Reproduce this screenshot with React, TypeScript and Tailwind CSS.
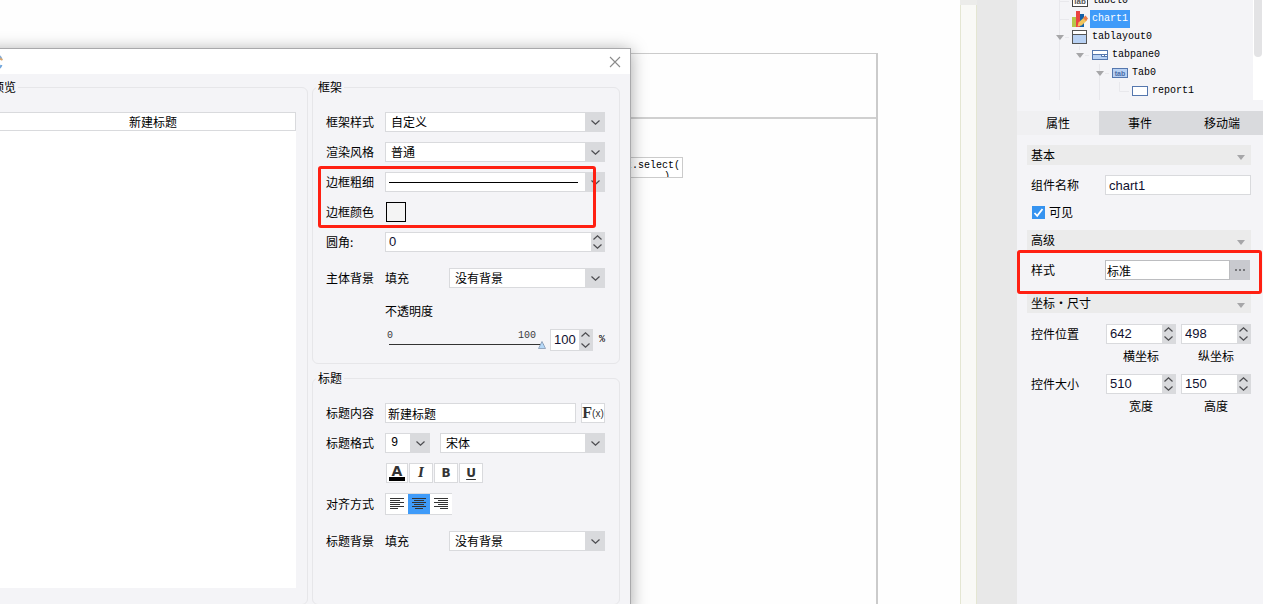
import { useState } from 'react';
import type { ReactNode } from 'react';

const LABEL_FONT = "font-['Noto_Sans_CJK_SC',sans-serif]";
const MONO_FONT = "font-['Liberation_Mono','Noto_Sans_CJK_SC',monospace]";
const INPUT_FONT = "font-['Liberation_Sans','Noto_Sans_CJK_SC',sans-serif]";

function Chevron({ up = false }: { up?: boolean }) {
  return (
    <svg width="9" height="5" viewBox="0 0 9 5" fill="none" stroke="#4b4b4f" strokeWidth="1.2">
      <path d={up ? 'M0.5 4.5L4.5 0.8L8.5 4.5' : 'M0.5 0.5L4.5 4.2L8.5 0.5'} />
    </svg>
  );
}

function Triangle() {
  return (
    <svg width="8" height="5" viewBox="0 0 8 5">
      <path d="M0 0H8L4 5Z" fill="#a6a6a8" />
    </svg>
  );
}

function Select({ label, options, className, children }: {
  label: string;
  options: string[];
  className: string;
  children?: ReactNode;
}) {
  return (
    <div className={`relative h-5 ${className}`}>
      <select
        aria-label={label}
        className="block h-5 w-full appearance-none border border-[#d9dadd] bg-white pl-[5px] pr-5 text-xs leading-[18px] text-black outline-none"
      >
        {options.map((option) => (
          <option key={option}>{option}</option>
        ))}
      </select>
      {children}
      <span className="pointer-events-none absolute inset-y-0 right-0 flex w-5 items-center justify-center bg-[#d9dadd]">
        <Chevron />
      </span>
    </div>
  );
}

function Spinner({ label, initial, className }: { label: string; initial: number; className: string }) {
  const [value, setValue] = useState(initial);

  return (
    <div className={`flex border border-[#d9dadd] bg-white ${className}`}>
      <input
        type="number"
        aria-label={label}
        value={value}
        onChange={(e) => setValue(Number(e.target.value))}
        className={`w-full min-w-0 flex-1 appearance-none bg-white pl-[3px] text-[13px] text-[#101030] outline-none [-moz-appearance:textfield] [&::-webkit-inner-spin-button]:appearance-none ${INPUT_FONT}`}
      />
      <div className="flex w-[13px] flex-none flex-col bg-[#d9dadd]">
        <button aria-label={`${label} +`} onClick={() => setValue(value + 1)} className="flex flex-1 items-start justify-center pt-[2px]">
          <Chevron up />
        </button>
        <button aria-label={`${label} -`} onClick={() => setValue(value - 1)} className="flex flex-1 items-end justify-center pb-[2px]">
          <Chevron />
        </button>
      </div>
    </div>
  );
}

function Row({ label, children }: { label: string; children: ReactNode }) {
  return (
    <div className="flex items-center">
      <span className="w-[59px] flex-none whitespace-nowrap">{label}</span>
      {children}
    </div>
  );
}

function Group({ title, className, children }: { title: string; className: string; children: ReactNode }) {
  return (
    <fieldset className={`min-w-0 rounded-md border border-[#e6e6e9] px-[3px] ${className}`}>
      <legend className="h-[18px] px-[2px] leading-[18px]">{title}</legend>
      {children}
    </fieldset>
  );
}

function OpacitySlider() {
  const [opacity, setOpacity] = useState(100);

  return (
    <div className="relative ml-[2px] h-[22px] w-[159px] flex-none">
      <div className={`flex justify-between pr-[10px] text-[10px] leading-[14px] text-[#3b3b3b] ${MONO_FONT}`}>
        <span>0</span>
        <span>100</span>
      </div>
      <div className="mx-[2px] mt-px h-px bg-[#333]" />
      <div className="absolute inset-x-0 bottom-[2px] h-2 pr-2">
        <svg
          width="8"
          height="8"
          viewBox="0 0 8 8"
          className="relative"
          style={{ left: `${opacity}%` }}
        >
          <path d="M4 0.500L7.500 7.500H0.500Z" fill="#b4d8f8" stroke="#8d9fb8" strokeWidth="0.9" />
        </svg>
      </div>
      <input
        type="range"
        aria-label="不透明度"
        min={0}
        max={100}
        value={opacity}
        onChange={(e) => setOpacity(Number(e.target.value))}
        className="absolute inset-0 w-full opacity-0"
      />
    </div>
  );
}

function AlignIcon({ align }: { align: 'left' | 'center' | 'right' }) {
  const widths = [14, 10, 14, 10, 14, 8];
  return (
    <svg width="14" height="12" viewBox="0 0 14 12" fill="#333">
      {widths.map((w, i) => {
        const x = align === 'left' ? 0 : align === 'center' ? (14 - w) / 2 : 14 - w;
        return <rect key={i} x={x} y={i * 2} width={w} height="1" />;
      })}
    </svg>
  );
}

function StyleDialog() {
  const [align, setAlign] = useState('center');
  const formatButton = 'flex h-5 items-center justify-center border border-[#d9dadd] bg-white text-[#333]';

  return (
    <div
      role="dialog"
      aria-label="样式"
      className="absolute top-12 -bottom-2 -left-[17px] flex w-[648px] flex-col border border-[#a9a9ab] bg-[#f4f4f7] shadow-[0_2px_16px_rgba(0,0,0,0.35)]"
    >
      {/* Title bar */}
      <div className="flex h-[25px] flex-none items-center justify-between bg-white pr-[9px] pl-[3px]">
        <svg width="16" height="16" viewBox="0 0 16 16" fill="none" strokeWidth="2">
          <path d="M14.5 5A6 6 0 0 0 3 6" stroke="#86a9cf" />
          <path d="M14.5 11A6 6 0 0 1 3 10" stroke="#6fa5dc" />
          <path d="M13 4.5L15.5 6" stroke="#d9a66e" />
        </svg>
        <button aria-label="关闭">
          <svg width="12" height="12" viewBox="0 0 12 12" stroke="#8b8b8b" strokeWidth="1.1">
            <path d="M1 1L11 11M11 1L1 11" />
          </svg>
        </button>
      </div>

      <div className="flex flex-1 gap-1 pt-1 pr-[10px] pb-[6px] pl-[2px]">
        {/* Preview */}
        <Group title="预览" className="flex flex-1 flex-col pb-4">
          <div className="mt-4 mr-2 flex-1 bg-white">
            <div className="h-[19px] border border-[#d9dadd] pl-5 text-center leading-[17px]">新建标题</div>
          </div>
        </Group>

        <div className="flex w-[308px] flex-none flex-col gap-[5px]">
          {/* Frame */}
          <Group title="框架" className="pb-3">
            <div className="flex flex-col gap-[10px] pt-4 pr-[11px] pl-[10px]">
              <Row label="框架样式">
                <Select label="框架样式" options={['自定义', '标准']} className="flex-1" />
              </Row>
              <Row label="渲染风格">
                <Select label="渲染风格" options={['普通', '阴影']} className="flex-1" />
              </Row>
              <div className="relative flex flex-col gap-[10px]">
                <Row label="边框粗细">
                  <Select label="边框粗细" options={['']} className="flex-1">
                    <span className="pointer-events-none absolute top-[10px] right-[27px] left-1 h-px bg-black" />
                  </Select>
                </Row>
                <Row label="边框颜色">
                  <button aria-label="边框颜色" className="ml-px h-5 w-5 border border-black bg-[#f4f4f4]" />
                </Row>
                <div className="pointer-events-none absolute -inset-y-[6px] right-[9px] -left-2 rounded-[3px] border-3 border-[#ff2012]" />
              </div>
              <Row label="圆角:">
                <Spinner label="圆角" initial={0} className="h-5 flex-1" />
              </Row>
            </div>
            <div className="flex flex-col pt-4 pr-[11px] pl-[10px]">
              <Row label="主体背景">
                <span className="w-16">填充</span>
                <Select label="主体背景填充" options={['没有背景', '颜色']} className="flex-1" />
              </Row>
              <div className="mt-[14px] ml-[59px] leading-[18px]">不透明度</div>
              <div className="mt-[9px] ml-[59px] flex items-center">
                <OpacitySlider />
                <Spinner label="不透明度数值" initial={100} className="ml-1 h-[22px] w-[43px]" />
                <span className={`ml-[6px] text-[10px] ${MONO_FONT}`}>%</span>
              </div>
            </div>
          </Group>

          {/* Title */}
          <Group title="标题" className="flex-1">
            <div className="flex flex-col gap-[10px] pt-4 pr-[11px] pl-[10px]">
              <Row label="标题内容">
                <input
                  aria-label="标题内容"
                  defaultValue="新建标题"
                  className="mr-[5px] h-5 min-w-0 flex-1 border border-[#d9dadd] bg-white pl-[2px] outline-none"
                />
                <button className={`${formatButton} w-6 font-['Liberation_Serif',serif] text-base font-bold`}>
                  F<span className="font-['Liberation_Sans',sans-serif] text-[10px] font-normal">(x)</span>
                </button>
              </Row>
              <Row label="标题格式">
                <Select label="字号" options={['9', '10', '12']} className={`mr-[10px] w-[45px] ${MONO_FONT}`} />
                <Select label="字体" options={['宋体', '黑体']} className="flex-1" />
              </Row>
              <div className="ml-[60px] flex gap-px font-['DejaVu_Sans',sans-serif] text-xs font-bold">
                <button aria-label="字体颜色" className={`${formatButton} w-[22px] flex-col text-sm leading-3`}>
                  A
                  <span className="h-1 w-4 bg-black" />
                </button>
                <button aria-label="斜体" className={`${formatButton} w-6 font-['DejaVu_Serif',serif] italic`}>I</button>
                <button aria-label="粗体" className={`${formatButton} w-6`}>B</button>
                <button aria-label="下划线" className={`${formatButton} w-6 underline underline-offset-2`}>U</button>
              </div>
              <Row label="对齐方式">
                <div className="flex h-[22px] border-y border-l border-[#d9dadd] bg-white">
                  {(['left', 'center', 'right'] as const).map((item) => (
                    <button
                      key={item}
                      aria-label={item}
                      onClick={() => setAlign(item)}
                      className={`flex w-[22px] items-center justify-center ${align === item ? 'bg-[#3f9bf9]' : ''}`}
                    >
                      <AlignIcon align={item} />
                    </button>
                  ))}
                </div>
              </Row>
            </div>
            <div className="pt-4 pr-[11px] pl-[10px]">
              <Row label="标题背景">
                <span className="w-16">填充</span>
                <Select label="标题背景填充" options={['没有背景', '颜色']} className="flex-1" />
              </Row>
            </div>
          </Group>
        </div>
      </div>
    </div>
  );
}

function LabelIcon() {
  return (
    <svg width="16" height="11" viewBox="0 0 16 11">
      <rect x="0.5" y="0.5" width="15" height="10" fill="#fff" stroke="#444" />
      <text x="8" y="8" textAnchor="middle" fontSize="8" fontWeight="bold" fontFamily="Liberation Sans" fill="#555">lab</text>
    </svg>
  );
}

function ChartIcon() {
  return (
    <svg width="16" height="16" viewBox="0 0 16 16">
      <rect x="0" y="6" width="4" height="10" fill="#b5c94a" />
      <rect x="4" y="0" width="4" height="16" fill="#ea4440" />
      <rect x="8" y="3" width="4" height="13" fill="#1260a8" />
      <path d="M5.500 15.500L6.500 11.500L12 6.500L15 9.500L9.500 14.500Z" fill="#f0c45c" />
      <path d="M11 7L13.500 4.500L16 7.500L14 10Z" fill="#ee7b48" />
    </svg>
  );
}

function LayoutIcon() {
  return (
    <svg width="15" height="14" viewBox="0 0 15 14">
      <rect x="0.5" y="0.5" width="14" height="13" fill="#b8d1f3" stroke="#555" />
      <rect x="1" y="1" width="13" height="3" fill="#fff" />
      <path d="M0 4.500H15" stroke="#555" />
    </svg>
  );
}

function PaneIcon() {
  return (
    <svg width="16" height="10" viewBox="0 0 16 10">
      <rect x="0.5" y="0.5" width="15" height="9" fill="#fff" stroke="#5577ae" />
      <path d="M1 4H9V6H15V9H1Z" fill="#b8d1f3" />
      <path d="M1 4.500H15M9.500 4.500V6.500H15M12.500 4.500V6.500" fill="none" stroke="#5577ae" />
    </svg>
  );
}

function TabIcon() {
  return (
    <svg width="16" height="10" viewBox="0 0 16 10">
      <rect x="0.5" y="0.5" width="15" height="9" fill="#b8d1f3" stroke="#5577ae" />
      <text x="8" y="8" textAnchor="middle" fontSize="7" fontWeight="bold" fontFamily="Liberation Sans" fill="#4b6ea8">tab</text>
    </svg>
  );
}

function ReportIcon() {
  return (
    <svg width="16" height="10" viewBox="0 0 16 10">
      <rect x="0.5" y="0.5" width="15" height="9" fill="#fff" stroke="#5577ae" />
    </svg>
  );
}

const treeItems = [
  { name: 'label0', indent: 'pl-[39px]', open: false, icon: <LabelIcon /> },
  { name: 'chart1', indent: 'pl-[39px]', open: false, icon: <ChartIcon /> },
  { name: 'tablayout0', indent: 'pl-[39px]', open: true, icon: <LayoutIcon /> },
  { name: 'tabpane0', indent: 'pl-[59px]', open: true, icon: <PaneIcon /> },
  { name: 'Tab0', indent: 'pl-[79px]', open: true, icon: <TabIcon /> },
  { name: 'report1', indent: 'pl-[99px]', open: false, icon: <ReportIcon /> },
];

function ComponentTree() {
  const [selected, setSelected] = useState('chart1');

  return (
    <div className="flex h-[100px] flex-none">
      <div className="relative flex flex-1 flex-col justify-end overflow-hidden">
        <svg width="140" height="100" viewBox="0 0 140 100" fill="none" stroke="#e8e8ec" className="absolute top-0 left-0">
          <path d="M42.500 0V100M42.500 1.500H52M42.500 19.500H52M48 37.500H52M62.500 46V50M68 55.500H72M82.500 64V100M88 73.500H92M102.500 82V91.500H112" />
        </svg>
        {treeItems.map((item) => (
          <div key={item.name} className={`relative flex h-[18px] flex-none items-center ${item.indent}`}>
            <span className="w-4">{item.open && <Triangle />}</span>
            <span className="w-4">{item.icon}</span>
            <button
              onClick={() => setSelected(item.name)}
              className={`ml-[2px] h-[18px] px-[2px] text-[10px] leading-[18px] ${MONO_FONT} ${
                selected === item.name ? 'bg-[#3f9bf9] text-white' : 'text-black'
              }`}
            >
              {item.name}
            </button>
          </div>
        ))}
      </div>
      <div className="w-[10px] bg-white px-px">
        <div className="h-[57px] rounded-b bg-[#e3e3e5]" />
      </div>
    </div>
  );
}

function SectionBar({ title }: { title: string }) {
  return (
    <button className="flex h-5 w-full items-center justify-between bg-[#ebebeb] pr-[6px] pl-1">
      <span>{title}</span>
      <span className="pt-1"><Triangle /></span>
    </button>
  );
}

function PairRow({ label, fields }: { label: string; fields: { name: string; value: number }[] }) {
  return (
    <div className="flex pl-1">
      <span className="w-[75px] flex-none leading-5">{label}</span>
      <div className="grid flex-1 grid-cols-2 gap-[5px]">
        {fields.map((field) => (
          <div key={field.name}>
            <Spinner label={field.name} initial={field.value} className="h-5" />
            <div className="mt-[3px] text-center leading-[18px]">{field.name}</div>
          </div>
        ))}
      </div>
    </div>
  );
}

function PropertyPanel() {
  const [tab, setTab] = useState('属性');

  return (
    <div className="flex w-[246px] flex-none flex-col bg-[#f4f4f7]">
      <ComponentTree />

      {/* Tabs */}
      <div className="mt-[11px] grid h-6 flex-none grid-cols-3">
        {['属性', '事件', '移动端'].map((name) => (
          <button
            key={name}
            onClick={() => setTab(name)}
            className={tab === name ? 'bg-[#f0f0f2]' : 'bg-[#d9dadd]'}
          >
            {name}
          </button>
        ))}
      </div>

      {/* Properties */}
      <div className="pt-[10px] pr-3 pl-[10px]">
        <SectionBar title="基本" />
        <div className="mt-[10px] flex items-center pl-1">
          <label htmlFor="component-name" className="w-[74px] flex-none">组件名称</label>
          <input
            id="component-name"
            defaultValue="chart1"
            className={`h-5 min-w-0 flex-1 border border-[#d9dadd] bg-white pl-[3px] text-[13px] text-[#101030] outline-none ${INPUT_FONT}`}
          />
        </div>
        <label className="mt-[7px] flex h-5 items-center gap-1 pl-[5px]">
          <span className="relative h-[13px] w-[13px]">
            <input type="checkbox" defaultChecked className="peer block h-[13px] w-[13px] appearance-none border border-[#3593f0] bg-white checked:bg-[#3593f0]" />
            <svg viewBox="0 0 13 13" fill="none" stroke="#fff" strokeWidth="1.8" className="pointer-events-none absolute inset-0 hidden peer-checked:block">
              <path d="M2.500 7L5.200 9.800L10.500 3" />
            </svg>
          </span>
          可见
        </label>
        <div className="mt-2">
          <SectionBar title="高级" />
        </div>
        <div className="relative mt-[10px] flex items-center pl-1">
          <label htmlFor="component-style" className="w-[74px] flex-none">样式</label>
          <input
            id="component-style"
            defaultValue="标准"
            className="h-5 min-w-0 flex-1 border border-[#bcbdc0] bg-white pl-px outline-none"
          />
          <button aria-label="编辑样式" className="mr-px flex h-5 w-5 items-center justify-center bg-[#c9cacf]">
            <svg width="10" height="2" viewBox="0 0 10 2" fill="#77777b">
              <path d="M0 0H2V2H0ZM4 0H6V2H4ZM8 0H10V2H8Z" />
            </svg>
          </button>
          <div className="pointer-events-none absolute -top-[10px] -right-[11px] -bottom-[14px] -left-[10px] rounded-[3px] border-3 border-[#ff2012]" />
        </div>
        <div className="mt-[13px]">
          <SectionBar title="坐标·尺寸" />
        </div>
        <div className="mt-[11px] flex flex-col gap-[9px]">
          <PairRow label="控件位置" fields={[{ name: '横坐标', value: 642 }, { name: '纵坐标', value: 498 }]} />
          <PairRow label="控件大小" fields={[{ name: '宽度', value: 510 }, { name: '高度', value: 150 }]} />
        </div>
      </div>
    </div>
  );
}

export default function App() {
  return (
    <div className={`flex h-screen overflow-hidden bg-[#fefefe] text-xs text-black ${LABEL_FONT}`}>
      {/* Report canvas */}
      <main className="relative flex flex-1 flex-col overflow-hidden pt-[53px] pr-[82px]">
        <div className="flex-1 border-t border-r-2 border-[#cbcbcb]">
          <div className="h-[65px] border-b-2 border-[#d0d0d0]" />
        </div>
        <div className={`absolute top-[157px] left-[560px] h-[21px] w-[123px] overflow-hidden border border-[#cbcbcb] bg-white pr-[2px] text-right text-[10px] leading-[15px] ${MONO_FONT}`}>
          <div>report.select(</div>
          <div className="-mt-1 pr-[10px]">)</div>
        </div>
        <StyleDialog />
      </main>

      {/* Gutter beside the canvas */}
      <div className="flex w-[57px] flex-none flex-col bg-[#e8e8e8]">
        <div className="h-[5px] w-[17px] bg-[#ececea]" />
        <div className="w-[17px] flex-1 border-x border-[#e4e6d2] bg-[#f9f9f6]" />
      </div>

      <PropertyPanel />
    </div>
  );
}
